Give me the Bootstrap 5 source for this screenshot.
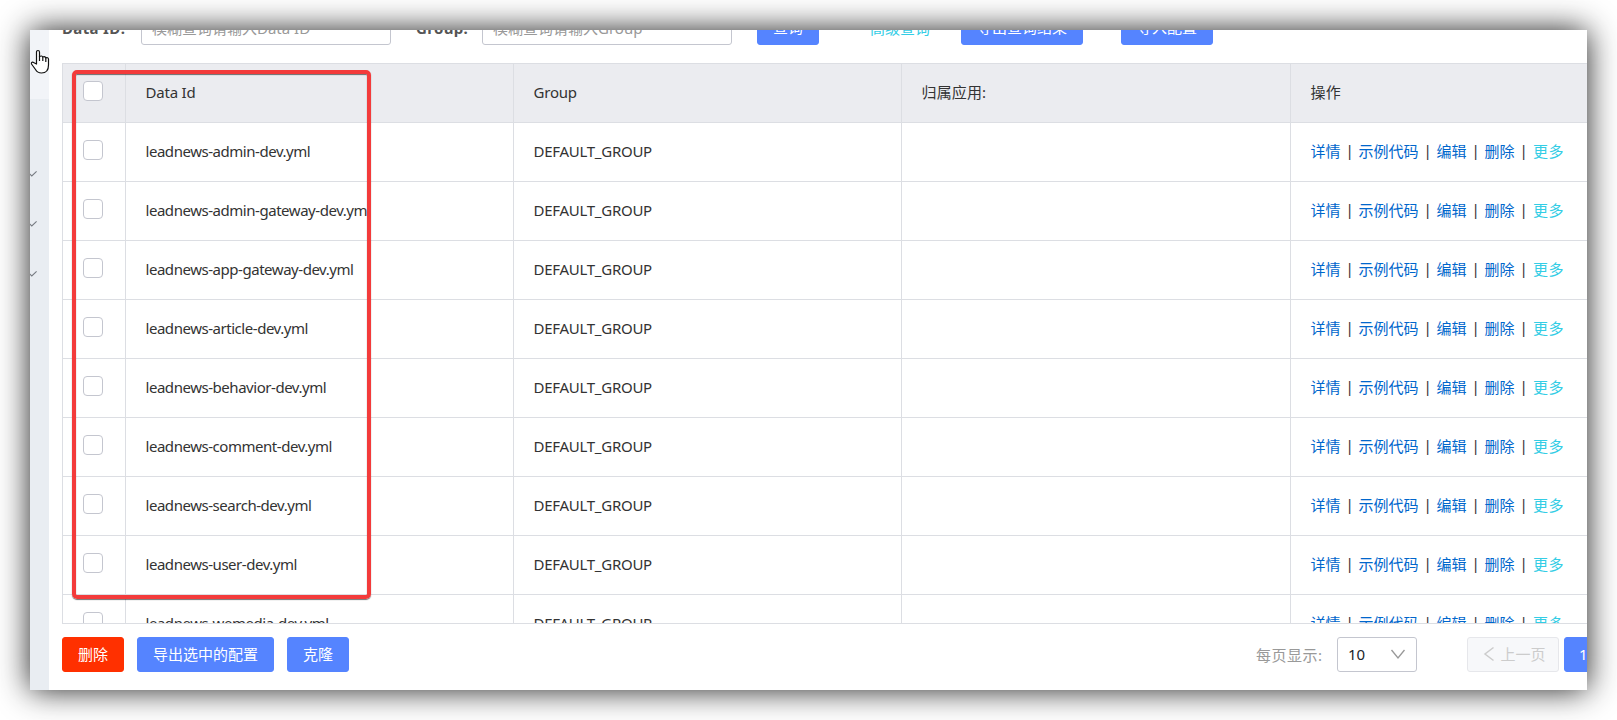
<!DOCTYPE html>
<html lang="zh-CN">
<head>
<meta charset="utf-8">
<title>配置管理</title>
<link rel="stylesheet" href="https://cdn.jsdelivr.net/npm/bootstrap@5.3.0/dist/css/bootstrap.min.css">
<style>
body{width:1617px;height:720px;overflow:hidden;padding:30px;background:#fff;font:15px/20px "Noto Sans","Noto Sans CJK SC",sans-serif;color:#333}
.panel{width:1557px;height:660px;background:#fff;box-shadow:0 0 30px rgba(0,0,0,.88)}
.inner{overflow:hidden}
.side{width:19px;flex:none;background:#e9edf2}
.side-active{height:69px;margin-bottom:71px;background:#f2f4f8}
.chev{display:block;width:8px;height:8px;margin-bottom:42px}
.page-main{width:1538px;padding-left:13px;overflow:hidden}
.toolbar{height:35px;margin-top:-20px;width:1525px}
.toolbar b{color:#555;white-space:nowrap;letter-spacing:.35px}
.lb-id{width:79px}
.lb-group{width:66px;margin-left:25px}
.field{width:250px;height:35px;border:1px solid #c4c6cf;border-radius:3px;padding:0 10px;color:#999;line-height:34px;white-space:nowrap;flex:none}
.btn{--bs-btn-padding-x:0;--bs-btn-padding-y:0;--bs-btn-font-size:15px;--bs-btn-border-radius:3px;height:35px;line-height:33px;flex:none}
.btn-primary{--bs-btn-bg:#5584ff;--bs-btn-border-color:#5584ff}
.btn-danger{--bs-btn-bg:#ff3000;--bs-btn-border-color:#ff3000}
.w62{width:62px}.w92{width:92px}.w122{width:122px}.w137{width:137px}
.query{margin-left:25px}.import{margin-left:38px}.export{margin:0 13px}
.page-no{width:40px;margin-left:5px;text-align:left;padding-left:14px}
.adv{color:#33cde5;margin:0 31px 0 51px}
.grid-wrap{height:561px;margin-top:18px;border:1px solid #dcdee3;border-right:0;overflow:hidden}
.cfg{width:1616px;table-layout:fixed;border-collapse:separate;border-spacing:0}
.c-chk{width:63px}.c-std{width:388px}.c-app{width:389px}
.cfg th,.cfg td{height:59px;padding:0 0 2px 20px;border-right:1px solid #dcdee3;border-bottom:1px solid #dcdee3;font-weight:400;vertical-align:middle;white-space:nowrap}
.cfg th{background:#ebecf0}
.cfg th:nth-child(n+2){padding-left:19.500px;letter-spacing:-.2px}
.cfg td:nth-child(2),.cfg td:nth-child(3){padding-left:19.500px}
.cfg td:nth-child(2){letter-spacing:-.46px}
.cfg td:nth-child(3){letter-spacing:-.27px}
.cfg td:nth-child(5){padding-left:19.500px}
.cfg th:nth-child(n+4){letter-spacing:.15px}
.chk{display:block;width:20px;height:20px;border:1px solid #c4c6cf;border-radius:4px;background:#fff;margin-top:-2px}
.ops a{color:#0066cc;text-decoration:none}
.ops a.more{color:#33cde5;letter-spacing:.4px;margin-left:.5px}
.ops i{font-style:normal;width:18px;text-align:center;line-height:18px}
.foot{margin-top:13px;width:1560px}
.per{color:#999;margin-left:907px;width:81px;white-space:nowrap;letter-spacing:.5px;flex:none}
.sel{width:80px;height:35px;border:1px solid #c4c6cf;border-radius:3px;padding:0 10px 2px 10px;flex:none}
.prev{width:92px;height:35px;border:1px solid #e6e7eb;border-radius:3px;background:#f7f8fa;color:#ccc;margin-left:50px;padding:0 0 1px 15px;flex:none}
.mark-box{left:72px;top:70px;width:299px;height:529px;border:4px solid #f33b3b;border-radius:5px;box-shadow:0 1px 1px rgba(0,0,0,.55),inset 0 1px 1px rgba(0,0,0,.55)}
.hand{left:30px;top:49px}
</style>
</head>
<body>
<div class="panel"><div class="inner d-flex h-100">
  <aside class="side overflow-hidden">
    <div class="side-active"></div>
    <svg class="chev" viewBox="0 0 8 8" fill="none" stroke="#777b82" stroke-width="1.1"><path d="M-1 3.2 1.8 6 6.6 1.4"/></svg>
    <svg class="chev" viewBox="0 0 8 8" fill="none" stroke="#777b82" stroke-width="1.1"><path d="M-1 3.2 1.8 6 6.6 1.4"/></svg>
    <svg class="chev" viewBox="0 0 8 8" fill="none" stroke="#777b82" stroke-width="1.1"><path d="M-1 3.2 1.8 6 6.6 1.4"/></svg>
  </aside>
  <main class="page-main">
    <div class="toolbar d-flex align-items-center">
      <b class="lb-id">Data ID:</b><div class="field">模糊查询请输入Data ID</div>
      <b class="lb-group">Group:</b><div class="field">模糊查询请输入Group</div>
      <button class="btn btn-primary w62 query">查询</button>
      <span class="adv">高级查询</span>
      <button class="btn btn-primary w122">导出查询结果</button>
      <button class="btn btn-primary w92 import">导入配置</button>
    </div>
    <div class="grid-wrap">
      <table class="cfg">
        <colgroup><col class="c-chk"><col class="c-std"><col class="c-std"><col class="c-app"><col class="c-std"></colgroup>
        <thead><tr><th><span class="chk"></span></th><th>Data Id</th><th>Group</th><th>归属应用:</th><th>操作</th></tr></thead>
        <tbody id="rows"></tbody>
      </table>
    </div>
    <div class="foot d-flex align-items-center">
      <button class="btn btn-danger w62">删除</button>
      <button class="btn btn-primary w137 export">导出选中的配置</button>
      <button class="btn btn-primary w62">克隆</button>
      <span class="per">每页显示:</span>
      <div class="sel d-flex align-items-center justify-content-between"><span class="text-dark">10</span>
        <svg width="16" height="12" fill="none" stroke="#999" stroke-width="1.3"><path d="M1.500 2 8 10 14.500 2"/></svg></div>
      <div class="prev d-flex align-items-center"><svg width="12" height="16" class="me-1" fill="none" stroke="#ccc" stroke-width="1.5"><path d="M10.500 1.500 2 8l8.500 6.500"/></svg><span>&#8202;上一页</span></div>
      <button class="btn btn-primary page-no">1</button>
    </div>
  </main>
</div></div>
<div class="mark-box position-absolute"></div>
<svg class="hand position-absolute" width="20" height="26" fill="#fff" stroke="#111" stroke-width="1.2" stroke-linejoin="round"><path d="M6.500 15V3.200q0-1.700 1.500-1.700t1.500 1.700V7.500q2.500-1.200 3.200.5 2.200-.8 3 .8 2.500-.6 2.800 1.200V16q0 8-7 8-4 0-6-3.500L1.500 15q-.5-2 1.500-1.800Z"/><path d="M9.500 7v5M12.800 8v4M15.800 9v4" fill="none"/></svg>
<script src="https://cdn.jsdelivr.net/npm/bootstrap@5.3.0/dist/js/bootstrap.bundle.min.js"></script>
<script>
document.getElementById('rows').innerHTML=['admin','admin-gateway','app-gateway','article','behavior','comment','search','user','wemedia'].map(n=>
`<tr><td><span class="chk"></span></td><td>leadnews-${n}-dev.yml</td><td>DEFAULT_GROUP</td><td></td><td><div class="ops d-flex"><a href="#">详情</a><i>|</i><a href="#">示例代码</a><i>|</i><a href="#">编辑</a><i>|</i><a href="#">删除</a><i>|</i><a href="#" class="more">更多</a></div></td></tr>`).join('');
</script>
</body>
</html>
